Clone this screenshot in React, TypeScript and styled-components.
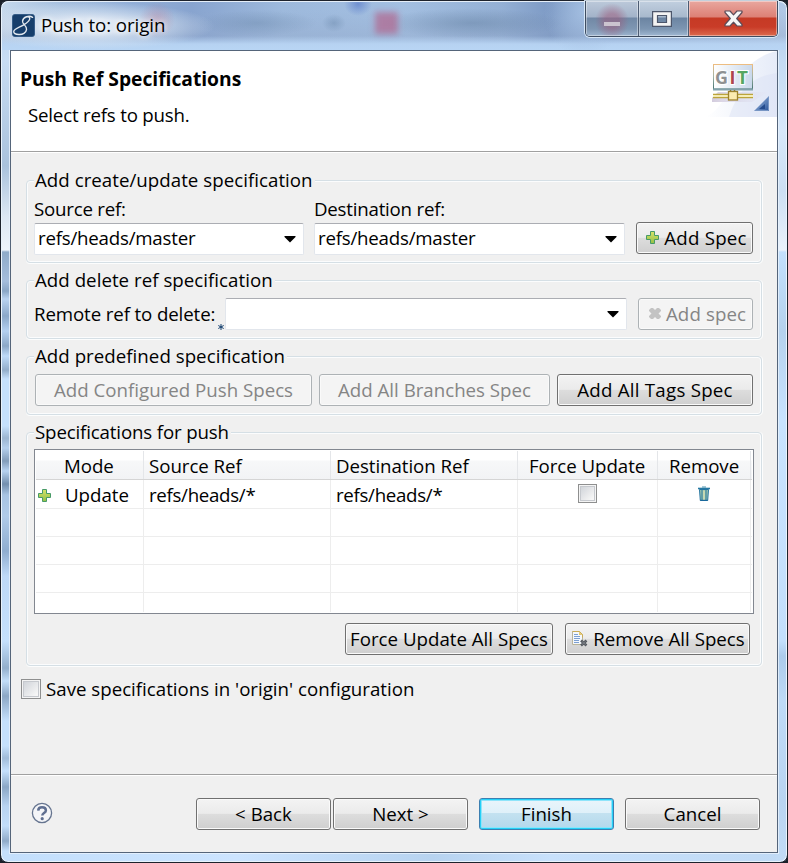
import React from 'react';
import styled, { createGlobalStyle, css } from 'styled-components';

const GlobalStyle = createGlobalStyle`
  * { box-sizing: border-box; }
  html, body { margin: 0; padding: 0; }
  body {
    width: 788px; height: 863px; overflow: hidden; background: #1b2029;
    font-family: "Open Sans", "Noto Sans", sans-serif;
    font-size: 18.7px; line-height: 24px; color: #000;
  }
`;

const Window = styled.div`
  width: 788px;
  height: 863px;
  padding: 0 8px 8px;
  display: flex;
  flex-direction: column;
  border: 1px solid #1d222c;
  border-radius: 8px;
  box-shadow: inset 0 0 0 1px #e9f3fc;
  background:
    linear-gradient(180deg, #b9d0ea 0, #c8ddf4 60px, #a9c2dc 165px, #dce7f3 215px, #edf4fb 249px,
      #8fabc9 251px, #a5bddc 280px, #8aa6c6 290px, #b9d2f0 298px, #8ba8c9 315px, #b4d0f0 330px,
      #8ca8c7 345px, #bedaf8 355px, #93adca 369px, #c5e0fc 378px, #c5e0fc 425px, #9cb5d0 437px,
      #b5cfec 447px, #829cb9 460px, #b7d2f0 470px, #738fae 483px, #a8c4e3 494px, #b0cbe9 515px,
      #8fadcf 550px, #bed9f7 575px, #c5e0fc 640px, #93afcc 667px, #c2ddf8 680px, #8ca7c5 695px,
      #c5e0fc 720px, #c5e0fc 745px, #a1bcd9 757px, #c5e0fc 770px, #8ba7c6 786px, #b8d3f1 805px,
      #c2ddf9 825px, #8faac8 840px, #c5e0fc 850px) left / 11px 100% no-repeat,
    linear-gradient(180deg, #a9c0dd 0, #c4dbf3 60px, #d7e8fa 130px, #ccdff3 190px, #eaf2fb 249px,
      #c3e0fd 251px, #b5d1ed 330px, #c8e3ff 420px, #c3dffc 640px, #accbeb 655px, #bedaf7 700px,
      #b9d4f1 800px, #c2dcf6 863px) right / 11px 100% no-repeat,
    linear-gradient(90deg, #c3dffc, #cce4ff 30%, #b7d3f0 55%, #c8e1fc 70%, #c0daf5);
`;

const TitleBar = styled.header`
  position: relative;
  height: 49px;
  flex: none;
  margin: 0 -7px;
  padding: 0 0 0 10px;
  display: flex;
  align-items: flex-start;
  border-top: 1px solid #e5eef8;
  border-radius: 7px 7px 0 0;
  background:
    radial-gradient(circle 18px at 155px 18px, rgba(190,120,145,.4), transparent),
    radial-gradient(ellipse 125px 24px at 88px 24px, rgba(228,236,246,.9) 0 30%, rgba(218,230,243,.55) 60%, transparent 100%),
    radial-gradient(ellipse 14px 12px at 356px 2px, rgba(91,125,202,.7), transparent),
    radial-gradient(ellipse 12px 9px at 332px 21px, rgba(105,135,170,.45), transparent),
    radial-gradient(ellipse 60px 13px at 255px 21px, rgba(105,135,170,.4), transparent),
    radial-gradient(ellipse 90px 15px at 470px 21px, rgba(96,125,158,.45), transparent),
    radial-gradient(ellipse 40px 45px at 582px 10px, rgba(165,192,226,.9), transparent),
    linear-gradient(180deg, transparent 34px, rgba(184,212,243,.95) 42px, #b9d6f5 49px),
    linear-gradient(180deg, transparent 8px, rgba(145,165,198,.3) 32px),
    linear-gradient(90deg, #c5d8ec 0, #a6c0df 60px, #92afd8 125px, #88a4cf 190px, #9db9dc 280px, #a3bfe1 400px, #94b0d5 500px, #7c99c4 550px, #89a5cd 590px, #b2c9e6 788px);

  &::after {
    content: '';
    position: absolute;
    left: 373px;
    top: 10px;
    width: 23px;
    height: 22px;
    background: rgba(178, 98, 137, .68);
    filter: blur(3px);
  }
`;

const TitleContent = styled.div`
  flex: 1;
  display: flex;
  align-items: center;
  gap: 6px;
  padding-top: 11px;
  letter-spacing: -.08px;
  text-shadow: 0 0 5px #fff, 0 0 9px rgba(255,255,255,.8);
`;

const CaptionButtons = styled.div`
  display: flex;
  height: 36px;
  margin: -1px 8px 0 0;
  border: 1px solid #3e4c60;
  border-top: 0;
  border-radius: 0 0 5px 5px;
  box-shadow: 0 0 0 1px rgba(225,238,252,.85);
  overflow: hidden;
`;

const CaptionButton = styled.button<{ $kind: 'min' | 'max' | 'close' }>`
  width: ${p => (p.$kind === 'min' ? 53 : p.$kind === 'max' ? 50 : 88)}px;
  padding: 0 ${p => (p.$kind === 'max' ? 3 : 0)}px 0 0;
  border: 0;
  border-right: ${p => (p.$kind === 'close' ? '0' : '1px solid #4d5c73')};
  display: flex;
  align-items: center;
  justify-content: center;
  box-shadow: inset 0 0 0 1px rgba(255,255,255,.4);
  background: ${p =>
    p.$kind === 'close'
      ? 'linear-gradient(180deg, #e9a79f 0, #dd8075 16px, #c53a25 17px, #c93c28 26px, #dc6a4e 35px)'
      : p.$kind === 'min'
      ? 'radial-gradient(ellipse 17px 18px at 26px 20px, rgba(158,88,120,.5) 0 40%, transparent), linear-gradient(180deg, #bcc9da 0, #a3b3c9 16px, #7188a5 17px, #7f97b3 28px, #9db4ce 35px)'
      : 'linear-gradient(180deg, #c1cfdf 0, #a8b9cd 16px, #6b84a2 17px, #7d96b2 28px, #a0b8d2 35px)'};
`;

const Client = styled.main`
  flex: 1;
  margin: 0 1px 1px;
  display: flex;
  flex-direction: column;
  border: 1px solid #55657a;
  box-shadow: 0 0 0 1px rgba(232,243,254,.8);
  background: #f0f0f0;
`;

const Banner = styled.section`
  height: 101px;
  flex: none;
  display: flex;
  justify-content: space-between;
  background: #fff;
  border-bottom: 1px solid #a0a0a0;
  box-shadow: 0 1px 0 #fff;
`;

const BannerText = styled.div`padding: 16px 0 0 9px;`;
const Heading = styled.h1`margin: 0; font-size: 19.25px; line-height: 24px; font-weight: 700; letter-spacing: -.02px;`;
const Subheading = styled.p`margin: 12px 0 0 8px; letter-spacing: -.2px;`;

const Body = styled.section`
  flex: 1;
  padding: 16px 15px 0;
  display: flex;
  flex-direction: column;
  gap: 5px;
`;

const Group = styled.fieldset<{ $h: number }>`
  height: ${p => p.$h}px;
  min-width: 0;
  margin: 0;
  padding: 0 8px 0 7px;
  border: 1px solid #d5dfe5;
  border-radius: 4px;
  box-shadow: inset 0 0 0 1px #fbfcfd, 0 1px 0 #fcfdfd, 1px 0 0 #fcfdfd;
`;

const Legend = styled.legend<{ $tight?: boolean }>`
  margin: 0;
  padding: 0 2px 0 1px;
  background: #f0f0f0;
  letter-spacing: ${p => (p.$tight ? -0.15 : 0.03)}px;
`;

const Row = styled.div<{ $top?: number; $gap?: number; $end?: boolean }>`
  display: flex;
  align-items: flex-start;
  justify-content: ${p => (p.$end ? 'flex-end' : 'flex-start')};
  margin-top: ${p => p.$top ?? 0}px;
  gap: ${p => p.$gap ?? 0}px;
`;

const Field = styled.label<{ $w: number }>`
  width: ${p => p.$w}px;
  display: flex;
  flex-direction: column;
  gap: 2px;
  letter-spacing: -.22px;
`;

const Combo = styled.div<{ $w: number }>`
  width: ${p => p.$w}px;
  height: 32px;
  flex: none;
  padding: 0 7px 2px 3px;
  display: flex;
  align-items: center;
  justify-content: space-between;
  background: #fff;
  border: 1px solid #e2e6ec;
  border-top-color: #abadb3;
  border-radius: 2px;
  svg { margin-top: 2px; }
`;

const Button = styled.button<{ $w: number; $tone?: 'disabled' | 'primary'; $track?: number; $shift?: number }>`
  width: ${p => p.$w}px;
  height: 32px;
  flex: none;
  padding: 0 0 1px ${p => p.$shift ?? 0}px;
  display: flex;
  align-items: center;
  justify-content: center;
  gap: 5px;
  white-space: nowrap;
  font: inherit;
  letter-spacing: ${p => p.$track ?? 0}px;
  color: #000;
  border: 1px solid #707070;
  border-radius: 3px;
  box-shadow: inset 0 0 0 1px #fafafa;
  background: linear-gradient(180deg, #f3f3f3 0, #ebebeb 48%, #dddddd 50%, #cfcfcf 100%);
  ${p => p.$tone === 'disabled' && css`
    color: #858585;
    border-color: #adb2b5;
    background: #f4f4f4;
  `}
  ${p => p.$tone === 'primary' && css`
    border-color: #3c7fb1;
    box-shadow: inset 0 0 0 1px #25d0f7, inset 0 0 0 2px #8fe4fa;
    background: linear-gradient(180deg, #eaf5fb 0, #dff0f9 46%, #c3e1f0 48%, #b3d8ec 100%);
  `}
`;

const RequiredMark = styled.span`
  width: 9px;
  height: 32px;
  display: flex;
  align-items: flex-end;
  justify-content: flex-end;
  padding-right: 1px;
`;

const DeleteLabel = styled.span`width: 183px; padding-top: 4px; white-space: nowrap; letter-spacing: -.12px;`;

const Table = styled.div`
  width: 720px;
  height: 165px;
  margin-top: 5px;
  padding: 1px 1px 2px;
  border: 1px solid #828790;
  background: #fff;
`;

const columns = '108px 187px 187px 140px 93px';

const HeaderRow = styled.div`
  height: 29px;
  display: grid;
  grid-template-columns: ${columns};
  background: linear-gradient(180deg, #fff 0, #fff 9px, #f7f8f9 10px, #f2f3f5 100%);
  border-bottom: 1px solid #d5d5d5;
`;

const HeaderCell = styled.div<{ $indent: number }>`
  padding: 3px 0 0 ${p => p.$indent}px;
  border-right: 1px solid #e4e6e9;
  letter-spacing: -.05px;
  white-space: nowrap;
`;

const TableRow = styled.div`
  height: 28px;
  display: grid;
  grid-template-columns: ${columns};
  border-bottom: 1px solid #ededed;
  &:nth-child(2) { height: 29px; }
  &:last-child { height: 19px; border-bottom: 0; }
`;

const Cell = styled.div<{ $indent?: number; $center?: boolean }>`
  display: flex;
  align-items: flex-start;
  justify-content: ${p => (p.$center ? 'center' : 'flex-start')};
  padding: 3px 0 0 ${p => p.$indent ?? 0}px;
  border-right: 1px solid #ededed;
  letter-spacing: -.3px;
  svg { flex: none; }
`;

const ModeText = styled.span`margin-left: 14px; letter-spacing: 0;`;

const Check = styled.span<{ $size: number }>`
  width: ${p => p.$size}px;
  height: ${p => p.$size}px;
  flex: none;
  border: 1px solid #8e8f8f;
  background: linear-gradient(135deg, #cbcfd5, #f6f6f6 80%);
  box-shadow: inset 0 0 0 1px #f4f4f4, inset 0 0 0 2px #c6c9ce;
`;

const SaveRow = styled.label`
  display: flex;
  align-items: center;
  gap: 5px;
  margin: 6px 0 0 -5px;
`;

const Footer = styled.footer`
  height: 78px;
  flex: none;
  display: flex;
  padding: 23px 17px 0 20px;
  border-top: 1px solid #a0a0a0;
  box-shadow: inset 0 1px 0 #fff;
`;

const HelpSlot = styled.div`flex: 1; padding-top: 4px;`;
const Spacer = styled.span<{ $w: number }>`width: ${p => p.$w}px; flex: none;`;
const IconDrop = styled.span<{ $y: number }>`display: flex; margin-top: ${p => p.$y}px;`;
const ActionRow = styled.div`
  display: flex;
  justify-content: flex-end;
  gap: 12px;
  margin: 9px 3px 0 0;
`;

const Arrow = () => <svg width="12" height="7" viewBox="0 0 12 7"><path d="M.5 0h11v1L6 6.500.5 1z" fill="#000" /></svg>;

const Plus = () => (
  <svg width="13" height="13" viewBox="0 0 13 13">
    <defs><linearGradient id="plusFill" x2="0" y2="1"><stop stopColor="#d7e36a" /><stop offset="1" stopColor="#92bf45" /></linearGradient></defs>
    <path d="M4.500 .5h4v4h4v4h-4v4h-4v-4h-4v-4h4z" fill="url(#plusFill)" stroke="#479a68" />
  </svg>
);

const Cross = () => (
  <svg width="12" height="13" viewBox="0 0 12 13">
    <path d="M2 1h2l2 2 2-2h2l2 2v1L9.500 6.500 12 9v1l-2 2H8l-2-2-2 2H2l-2-2V9l2.500-2.500L0 4V3z" fill="#c3c3c3" />
  </svg>
);

const Trash = () => (
  <svg width="12" height="16" viewBox="0 0 12 16">
    <path d="M1.500 3.500h9l-.8 11H2.300z" fill="#9cc2ae" stroke="#2474a0" />
    <path d="M4 4v10M8 4v10" stroke="#2b7a9f" />
    <path d="M6 4.500v9.500" stroke="#d3dfb4" strokeWidth="1.500" />
    <path d="M2.300 14.300h7.400" stroke="#17669a" />
    <path d="M0 2.500h12" stroke="#2679a3" strokeWidth="1.600" />
    <path d="M4 1h4" stroke="#4b93ad" />
  </svg>
);

const DocRemove = () => (
  <svg width="16" height="16" viewBox="0 0 16 16">
    <path d="M.5 .5h7l3 3v10H.5z" fill="#f4f8fd" stroke="#b9b49a" />
    <path d="M.5 .5h7l3 3v3" fill="none" stroke="#c9ab57" />
    <path d="M7 .5v3.500h3.500z" fill="#e5c76f" />
    <path d="M2 3.500h4M2 5.500h6M2 7.500h6M2 9.500h5M2 11.500h5" stroke="#7da0d2" />
    <path d="M9 9.500l5.500 5M14.500 9.500L9 14.500" stroke="#555a60" strokeWidth="2.600" />
    <path d="M10 10.500l3.500 3M13.500 10.500L10 13.500" stroke="#83888e" strokeWidth=".8" />
  </svg>
);

const Help = () => (
  <svg width="22" height="22" viewBox="0 0 22 22" fill="none">
    <circle cx="11" cy="11" r="9.600" fill="#f4f5f8" stroke="#65748f" strokeWidth="1.300" />
    <path d="M7.200 8.600C7.300 6.500 8.800 5.300 11 5.300c2.300 0 3.900 1.200 3.900 3.100 0 2.600-3.600 2.700-3.600 5" stroke="#5f6f91" strokeWidth="2.500" />
    <circle cx="11.200" cy="16.700" r="1.600" fill="#5f6f91" />
  </svg>
);

const AppLogo = () => (
  <svg width="23" height="23" viewBox="0 0 24 24" fill="none">
    <rect x=".5" y=".5" width="23" height="23" rx="2.500" fill="#163e6b" stroke="#315985" />
    <path d="M21.500 3.500C18 1 11.500 3 11 7.500c-.4 3.500 4.600 4.300 4.200 8.500-.4 3.600-4.200 5.700-8 5.400-3-.2-5.500-1.500-5.400-3.200.2-2.700 6.300-4.400 10-6.600 3.500-2 7.200-4.800 6.700-7.200-.3-1.500-3-1.900-5-.7" stroke="#e3e9ef" strokeWidth="1.400" strokeLinecap="round" />
  </svg>
);

const Asterisk = () => (
  <svg width="6" height="6" viewBox="0 0 6 6"><path d="M3 0v6M.3 1.500l5.400 3M5.700 1.500l-5.400 3" stroke="#15406f" /></svg>
);

const GitBanner = () => (
  <svg width="78" height="66" viewBox="699 51 78 66">
    <defs>
      <linearGradient id="sweep"><stop stopColor="#fff" /><stop offset="1" stopColor="#e1e8f7" /></linearGradient>
      <linearGradient id="panel"><stop stopColor="#fff" /><stop offset="1" stopColor="#c9d8eb" /></linearGradient>
      <linearGradient id="edge" x2="0" y2="1"><stop stopColor="#edbd81" /><stop offset=".5" stopColor="#a0b2a7" /><stop offset="1" stopColor="#46736f" /></linearGradient>
      <linearGradient id="corner" x2="1" y2="1"><stop stopColor="#a8c3e6" /><stop offset="1" stopColor="#2c569b" /></linearGradient>
      <linearGradient id="shade"><stop stopColor="#c8bfd5" /><stop offset="1" stopColor="#e4e5f4" stopOpacity=".3" /></linearGradient>
    </defs>
    <path d="M777 51v66h-72c24-8 28-56 72-66z" fill="url(#sweep)" opacity=".85" />
    <path d="M777 73c-22 3-38 14-48 44h48z" fill="#d9e1f5" opacity=".45" />
    <path d="M712 98l6-6h50l-16 10h-40z" fill="url(#shade)" opacity=".8" />
    <rect x="713.500" y="64.500" width="39" height="24.500" fill="url(#panel)" stroke="url(#edge)" />
    <path d="M713 89.500h40" stroke="#82a1ab" strokeWidth="2" />
    <g fontFamily="Open Sans, sans-serif" fontWeight="700" fontSize="18" stroke="#fff" strokeWidth="2" paintOrder="stroke">
      <text x="715" y="83.500" textLength="13" lengthAdjust="spacingAndGlyphs" fill="#8f9192">G</text>
      <text x="729.500" y="83.500" fill="#ae454d">I</text>
      <text x="737" y="83.500" textLength="11" lengthAdjust="spacingAndGlyphs" fill="#56a760">T</text>
    </g>
    <path d="M713 94.500h40M713 97.500h40" stroke="#bba43c" strokeWidth="1.400" />
    <path d="M713 96h40" stroke="#fff6b2" strokeWidth="1.500" />
    <path d="M730.500 90v2M734.500 90v2" stroke="#8b7b36" strokeWidth="1.500" />
    <rect x="728.500" y="91.500" width="9" height="8.500" fill="#fbebb0" stroke="#9d822d" strokeWidth="1.300" />
    <path d="M769 96v15h-15z" fill="url(#corner)" />
    <path d="M765 104v5h-6z" fill="#244b8d" />
    <path d="M768.500 97v13.500H755" fill="none" stroke="#7896c4" />
  </svg>
);

const MinGlyph = () => <svg width="18" height="14" viewBox="0 0 18 14"><rect x="1" y="10" width="16" height="4" fill="#cbc3cf" /></svg>;
const MaxGlyph = () => (
  <svg width="20" height="16" viewBox="0 0 20 16">
    <path fillRule="evenodd" d="M.6.600h18.800v14.800H.6zM5.500 4.500v7h9v-7z" fill="#f3f3f3" stroke="#4c566b" strokeWidth="1.200" />
  </svg>
);
const CloseGlyph = () => (
  <svg width="19" height="17" viewBox="0 0 19 17">
    <path d="M1 1h5l3.500 3.800L13 1h5v1.500L12.700 8.500 18 14.500V16h-5l-3.500-3.800L6 16H1v-1.500l5.300-6L1 2.500z" fill="#f5f5f5" stroke="#5b4a56" strokeWidth="1.200" strokeLinejoin="round" />
  </svg>
);

const headers: [string, number][] = [['Mode', 28], ['Source Ref', 5], ['Destination Ref', 5], ['Force Update', 11], ['Remove', 11]];

export default function App() {
  return (
    <>
      <GlobalStyle />
      <Window>
        <TitleBar>
          <TitleContent><AppLogo /><span>Push to: origin</span></TitleContent>
          <CaptionButtons>
            <CaptionButton $kind="min" aria-label="Minimize"><MinGlyph /></CaptionButton>
            <CaptionButton $kind="max" aria-label="Maximize"><MaxGlyph /></CaptionButton>
            <CaptionButton $kind="close" aria-label="Close"><CloseGlyph /></CaptionButton>
          </CaptionButtons>
        </TitleBar>
        <Client>
          <Banner>
            <BannerText>
              <Heading>Push Ref Specifications</Heading>
              <Subheading>Select refs to push.</Subheading>
            </BannerText>
            <GitBanner />
          </Banner>
          <Body>
            <Group $h={95}>
              <Legend>Add create/update specification</Legend>
              <Row $top={5}>
                <Row $gap={10}>
                  <Field $w={270}>Source ref:<Combo $w={270}>refs/heads/master<Arrow /></Combo></Field>
                  <Field $w={311}>Destination ref:<Combo $w={311}>refs/heads/master<Arrow /></Combo></Field>
                </Row>
                <Spacer $w={11} />
                <Row $top={25}><Button $w={117} $track={0.25} $shift={4}><Plus />Add Spec</Button></Row>
              </Row>
            </Group>
            <Group $h={71}>
              <Legend>Add delete ref specification</Legend>
              <Row $top={6}>
                <DeleteLabel>Remote ref to delete:</DeleteLabel>
                <RequiredMark><Asterisk /></RequiredMark>
                <Combo $w={402}><span /><Arrow /></Combo>
                <Spacer $w={11} />
                <Button $w={115} $tone="disabled" $track={0.1} $shift={4}><Cross />Add spec</Button>
              </Row>
            </Group>
            <Group $h={71}>
              <Legend>Add predefined specification</Legend>
              <Row $top={6} $gap={7} $end>
                <Button $w={277} $tone="disabled">Add Configured Push Specs</Button>
                <Button $w={231} $tone="disabled">Add All Branches Spec</Button>
                <Button $w={196} $track={0.25}>Add All Tags Spec</Button>
              </Row>
            </Group>
            <Group $h={246}>
              <Legend $tight>Specifications for push</Legend>
              <Table>
                <HeaderRow>
                  {headers.map(([name, indent]) => <HeaderCell key={name} $indent={indent}>{name}</HeaderCell>)}
                </HeaderRow>
                <TableRow>
                  <Cell $indent={2}><IconDrop $y={6}><Plus /></IconDrop><ModeText>Update</ModeText></Cell>
                  <Cell $indent={5}>refs/heads/*</Cell>
                  <Cell $indent={5}>refs/heads/*</Cell>
                  <Cell $center><IconDrop $y={1}><Check $size={19} /></IconDrop></Cell>
                  <Cell $center><IconDrop $y={3}><Trash /></IconDrop></Cell>
                </TableRow>
                {[0, 1, 2, 3].map(i => (
                  <TableRow key={i}><Cell /><Cell /><Cell /><Cell /><Cell /></TableRow>
                ))}
              </Table>
              <ActionRow>
                <Button $w={208}>Force Update All Specs</Button>
                <Button $w={185} $shift={2}><DocRemove />Remove All Specs</Button>
              </ActionRow>
            </Group>
            <SaveRow><Check $size={20} />Save specifications in 'origin' configuration</SaveRow>
          </Body>
          <Footer>
            <HelpSlot><Help /></HelpSlot>
            <Row $gap={11}>
              <Row $gap={2}>
                <Button $w={135}>&lt; Back</Button>
                <Button $w={135}>Next &gt;</Button>
              </Row>
              <Button $w={135} $tone="primary">Finish</Button>
              <Button $w={135}>Cancel</Button>
            </Row>
          </Footer>
        </Client>
      </Window>
    </>
  );
}
